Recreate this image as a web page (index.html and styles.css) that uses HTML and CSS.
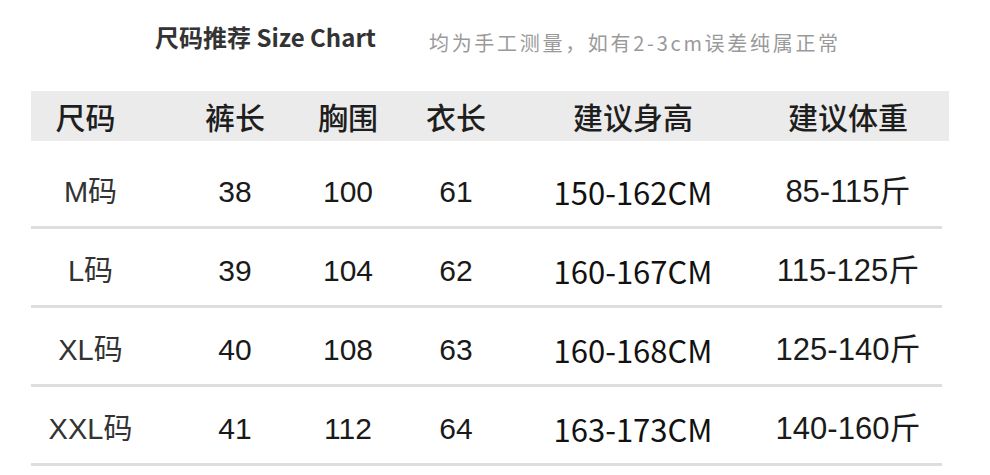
FILE: index.html
```html
<!DOCTYPE html>
<html lang="zh-CN">
<head>
<meta charset="utf-8">
<title>尺码推荐 Size Chart</title>
<link rel="stylesheet" href="styles.css">
</head>
<body>
<div class="page">
  <div class="top">
    <div class="title">尺码推荐 Size Chart</div>
    <div class="note">均为手工测量，如有2-3cm误差纯属正常</div>
  </div>
  <div class="table">
    <div class="head">
      <div class="c1">尺码</div>
      <div>裤长</div>
      <div>胸围</div>
      <div>衣长</div>
      <div>建议身高</div>
      <div class="c6">建议体重</div>
    </div>
    <div class="row first">
      <div class="c1 size">M码</div>
      <div class="num">38</div>
      <div class="num">100</div>
      <div class="num">61</div>
      <div class="height">150-162CM</div>
      <div class="c6 weight">85-115斤</div>
    </div>
    <div class="row">
      <div class="c1 size">L码</div>
      <div class="num">39</div>
      <div class="num">104</div>
      <div class="num">62</div>
      <div class="height">160-167CM</div>
      <div class="c6 weight">115-125斤</div>
    </div>
    <div class="row">
      <div class="c1 size">XL码</div>
      <div class="num">40</div>
      <div class="num">108</div>
      <div class="num">63</div>
      <div class="height">160-168CM</div>
      <div class="c6 weight">125-140斤</div>
    </div>
    <div class="row">
      <div class="c1 size">XXL码</div>
      <div class="num">41</div>
      <div class="num">112</div>
      <div class="num">64</div>
      <div class="height">163-173CM</div>
      <div class="c6 weight">140-160斤</div>
    </div>
  </div>
</div>
</body>
</html>
```
FILE: styles.css
```css
html, body {
  margin: 0;
  padding: 0;
  background: #ffffff;
}
body {
  font-family: "Noto Sans CJK SC", "Noto Sans", sans-serif;
  color: #1c1c1c;
}
.page {
  width: 990px;
  height: 475px;
  overflow: hidden;
}
.top {
  display: flex;
  align-items: flex-start;
  height: 28px;
  padding: 25px 0 0 155px;
}
.title {
  font-size: 24px;
  line-height: 24px;
  font-weight: 700;
  color: #333333;
}
.note {
  margin: 8px 0 0 53px;
  font-size: 20px;
  line-height: 20px;
  color: #9a9a9a;
  letter-spacing: 2.7px;
}
.table {
  margin: 38px 0 0 31px;
}
.head {
  display: grid;
  grid-template-columns: 129px 150px 76px 140px 214px 209px;
  width: 918px;
  align-items: center;
  height: 50px;
  background: #ebebeb;
  font-size: 30px;
  line-height: 36px;
  font-weight: 500;
  color: #1e1e1e;
  text-align: center;
}
.head .c1 { padding-right: 20px; }
.head .c6 { padding-left: 7px; }
.row {
  display: grid;
  grid-template-columns: 129px 150px 76px 140px 214px 202px;
  width: 911px;
  align-items: center;
  padding: 24px 0 16px;
  border-bottom: 3px solid #dedede;
  text-align: center;
  line-height: 36px;
}
.row.first {
  padding-top: 33px;
}
.row .c1 { padding-right: 10px; }
.row .c6 { padding-left: 14px; }
.size {
  font-family: "Liberation Sans", "Noto Sans CJK SC", sans-serif;
  font-size: 29px;
  color: #333333;
}
.num {
  font-family: "Liberation Sans", "Noto Sans CJK SC", sans-serif;
  font-size: 30px;
  color: #1a1a1a;
}
.weight {
  font-family: "Liberation Sans", "Noto Sans CJK SC", sans-serif;
  font-size: 31px;
  color: #1a1a1a;
}
.height {
  font-family: "Noto Sans CJK SC", sans-serif;
  font-size: 31px;
  font-weight: 400;
  color: #111111;
}
```
